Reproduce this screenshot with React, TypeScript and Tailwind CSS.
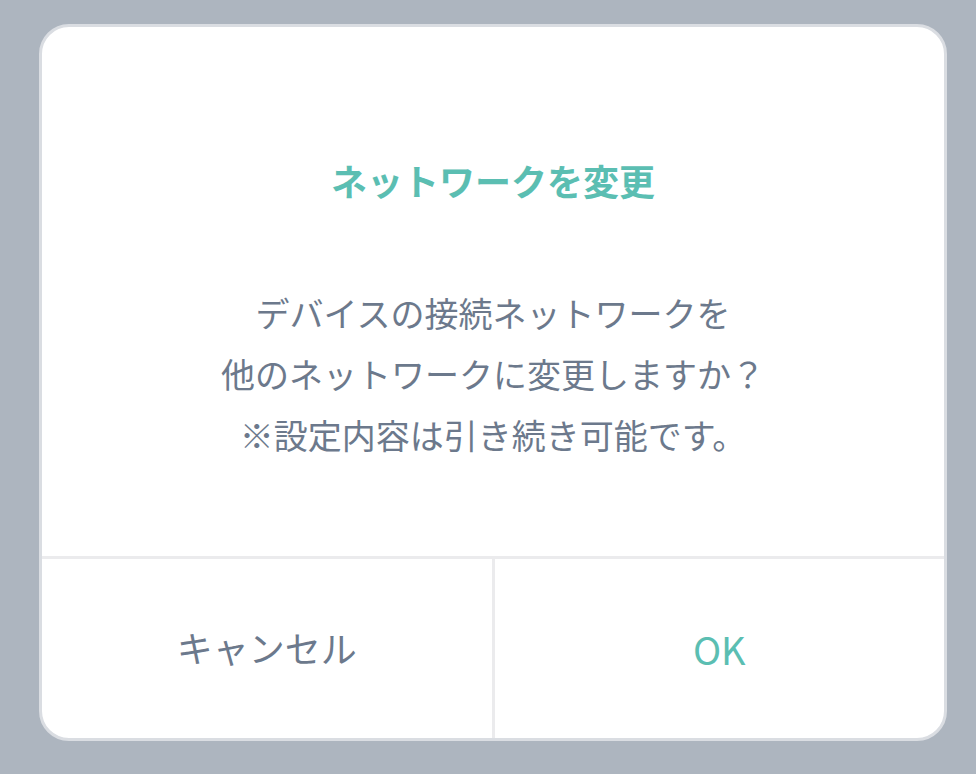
export default function App() {
  return (
    <div
      className="h-[774px] w-[976px] bg-[#adb5bf] pl-[39px] pt-[24px]"
      style={{ fontFamily: '"Noto Sans CJK JP", "Noto Sans", sans-serif' }}
    >
      <div className="flex h-[717px] w-[908px] flex-col overflow-hidden rounded-[30px] border-[3px] border-[#dadde2] bg-white">
        <div className="flex flex-1 flex-col items-center pt-[128px]">
          <h2 className="text-[36px] font-bold leading-[50px] text-[#5bbeb2]">
            ネットワークを変更
          </h2>
          <p className="mt-[77px] text-center text-[34px] leading-[61px] text-[#6c798c]">
            デバイスの接続ネットワークを
            <br />
            他のネットワークに変更しますか？
            <br />
            ※設定内容は引き続き可能です。
          </p>
        </div>
        <div className="flex h-[182px] border-t-[3px] border-[#ebebed]">
          <button className="flex flex-1 items-center justify-center pb-[4px] text-[36px] text-[#6c798c]">
            キャンセル
          </button>
          <div className="w-[3px] bg-[#ebebed]" />
          <button className="flex flex-1 items-center justify-center text-[38px] text-[#5bbeb2]">
            OK
          </button>
        </div>
      </div>
    </div>
  );
}
